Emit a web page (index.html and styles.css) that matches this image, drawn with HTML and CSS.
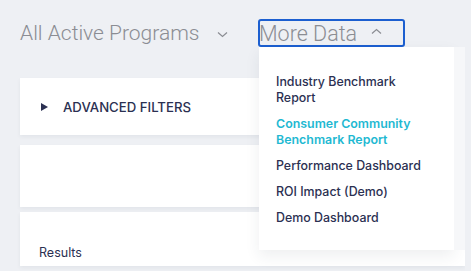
FILE: index.html
```html
<!DOCTYPE html>
<html lang="en">
<head>
    <meta charset="UTF-8">
    <title>Programs</title>
    <link rel="stylesheet" href="styles.css">
</head>
<body>
    <div class="page">
        <div class="header">
            <div class="program-select">
                All Active Programs
                <svg class="chev" width="11" height="7" viewBox="0 0 11 7"><path d="M1 1.5 L5.5 5.5 L10 1.5" fill="none" stroke="#8b8d93" stroke-width="1.2"/></svg>
            </div>
            <div class="more-data">
                <button class="more-btn">
                    <span class="more-label">More Data</span>
                    <svg class="chev" width="11" height="7" viewBox="0 0 11 7"><path d="M1 5.5 L5.5 1.5 L10 5.5" fill="none" stroke="#8b8d93" stroke-width="1.2"/></svg>
                </button>
                <ul class="menu">
                    <li>Industry Benchmark Report</li>
                    <li class="active">Consumer Community Benchmark Report</li>
                    <li>Performance Dashboard</li>
                    <li>ROI Impact (Demo)</li>
                    <li>Demo Dashboard</li>
                </ul>
            </div>
        </div>

        <div class="card filters">
            <span class="tri"></span>
            ADVANCED FILTERS
        </div>
        <div class="card blank"></div>
        <div class="card results">Results</div>
    </div>
</body>
</html>
```

FILE: styles.css
```css
body {
    margin: 0;
    background-color: #eef0f4;
    font-family: Inter, "Noto Sans", sans-serif;
    color: #2b3052;
}
.page {
    padding: 19px 0 0 20px;
    width: 445px;
    overflow: hidden;
    height: 252px;
}
.header {
    display: flex;
    align-items: center;
    height: 28px;
    margin-bottom: 31px;
}
.program-select {
    font-family: Roboto, "Liberation Sans", sans-serif;
    font-weight: 300;
    font-size: 21px;
    color: #8b8d93;
    width: 238px;
    display: flex;
    align-items: center;
}
.program-select .chev {
    margin-left: 18px;
    margin-top: 3px;
}
.more-data {
    position: relative;
}
.more-btn {
    font-family: Roboto, "Liberation Sans", sans-serif;
    font-weight: 300;
    font-size: 21.5px;
    color: #8b8d93;
    background: transparent;
    border: 2px solid #1c5fd0;
    border-radius: 3px;
    height: 28px;
    width: 147px;
    padding: 0;
    display: flex;
    align-items: center;
    text-align: left;
}
.more-label {
    margin-left: -1px;
}
.more-btn .chev {
    margin-left: 14px;
    margin-top: -3px;
}
.menu {
    position: absolute;
    z-index: 2;
    top: 28px;
    left: 1px;
    width: 195px;
    height: 203px;
    margin: 0;
    padding: 27px 0 0 17px;
    box-sizing: border-box;
    list-style: none;
    background-color: #fff;
    box-shadow: 11px 0 0 #f6f7f9, 0 6px 14px rgba(40, 45, 70, 0.08);
    font-size: 12.4px;
    line-height: 16px;
    font-weight: 500;
}
.menu li {
    margin-bottom: 10px;
    width: 160px;
}
.menu li.active {
    color: #1fb9d2;
    font-weight: 600;
}
.card {
    background-color: #fff;
    box-shadow: 0 2px 4px rgba(40, 45, 70, 0.06);
}
.filters {
    height: 57px;
    display: flex;
    align-items: center;
    padding-left: 21px;
    font-size: 13.2px;
    font-weight: 500;
    margin-bottom: 10px;
}
.tri {
    width: 0;
    height: 0;
    border-top: 4px solid transparent;
    border-bottom: 4px solid transparent;
    border-left: 7px solid #2b3052;
    margin-right: 15px;
}
.blank {
    height: 62px;
    margin-bottom: 5px;
}
.results {
    height: 54px;
    box-sizing: border-box;
    padding: 33px 0 0 19px;
    font-size: 12.5px;
}
```
